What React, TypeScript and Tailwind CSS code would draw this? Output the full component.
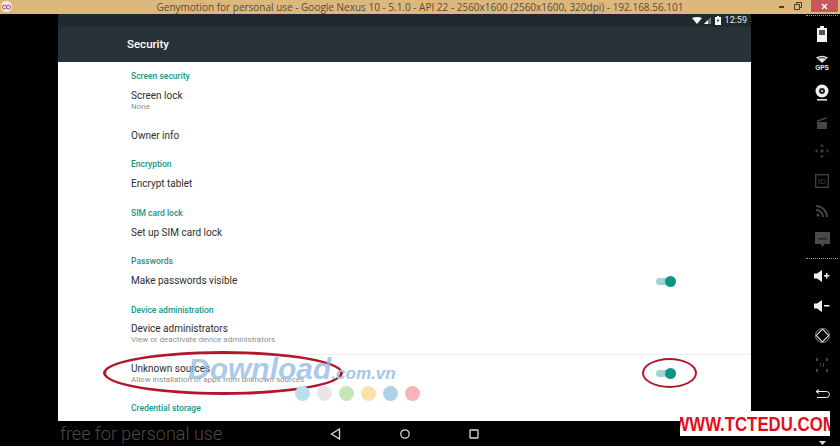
const roboto = "font-['Roboto',sans-serif]";

function Header({ children, className = "" }: { children: string; className?: string }) {
  return <div className={`h-4 text-[8.5px] leading-4 font-medium text-[#16968a] ${className}`}>{children}</div>;
}

function Toggle() {
  return (
    <div className="relative h-[11px] w-5 mr-[75px]">
      <div className="absolute left-0 right-[2px] top-[2px] h-[7px] rounded-full bg-[#9fd5cf]" />
      <div className="absolute right-0 top-0 h-[11px] w-[11px] rounded-full bg-[#0d9488]" />
    </div>
  );
}

function Title({ children, className = "" }: { children: string; className?: string }) {
  return <div className={`h-[14px] text-[10px] leading-[14px] text-[#2e2e2e] ${className}`}>{children}</div>;
}

function Sub({ children }: { children: string }) {
  return <div className="h-2 text-[8px] leading-2 text-[#8f8f8f] whitespace-nowrap">{children}</div>;
}

const slot = "flex h-[29.5px] items-center justify-center";

function Sidebar() {
  return (
    <div className="w-[89px] shrink-0 bg-black pl-[55px] pr-[2px] flex flex-col">
      <div className="mt-[1px] h-[1px] border-t border-dotted border-[#999]" />
      <div className="h-[3px]" />
      <div className={slot}>
        <svg width="12" height="16" viewBox="0 0 12 16"><path d="M4 0h4v2h3v14H1V2h3z" fill="#f2f2f2" /><rect x="3" y="4" width="6" height="5" fill="#555" /></svg>
      </div>
      <div className={slot}>
        <svg width="18" height="16" viewBox="0 0 18 16">
          <path d="M3 2.5Q9-1 15 2.5L9 8z" fill="#ddd" />
          <path d="M5.5 3.4Q9 1.6 12.5 3.4" stroke="#000" strokeWidth=".8" fill="none" />
          <text x="9" y="15" textAnchor="middle" fontSize="6.5" fontWeight="700" fill="#eee" fontFamily="Liberation Sans">GPS</text>
        </svg>
      </div>
      <div className={slot}>
        <svg width="14" height="17" viewBox="0 0 14 17">
          <circle cx="7" cy="7" r="6.5" fill="#f0f0f0" /><circle cx="7" cy="7" r="3" fill="#222" /><circle cx="7" cy="7" r="1" fill="#ddd" />
          <rect x="2" y="15" width="10" height="1.6" fill="#ddd" />
        </svg>
      </div>
      <div className={slot}>
        <svg width="12" height="13" viewBox="0 0 12 13"><path d="M1 4.5 10.5 1l.5 1.6L1.5 6z" fill="#444" /><rect x="1" y="6" width="10" height="7" fill="#444" /></svg>
      </div>
      <div className={slot}>
        <svg width="14" height="14" viewBox="0 0 14 14" fill="#444">
          <path d="M7 0 9 2.5H5zM7 14l2-2.5H5zM0 7l2.5-2v4zM14 7l-2.5-2v4z" /><circle cx="7" cy="7" r="1.5" />
        </svg>
      </div>
      <div className={slot}>
        <svg width="14" height="14" viewBox="0 0 14 14"><rect x=".7" y=".7" width="12.6" height="12.6" fill="none" stroke="#444" strokeWidth="1.3" /><text x="7" y="10" textAnchor="middle" fontSize="8" fill="#444" fontFamily="Liberation Sans">ID</text></svg>
      </div>
      <div className={slot}>
        <svg width="13" height="13" viewBox="0 0 13 13" fill="none" stroke="#444" strokeWidth="2">
          <circle cx="2" cy="11" r="1.6" fill="#444" stroke="none" /><path d="M0 6a7 7 0 0 1 7 7M0 2a11 11 0 0 1 11 11" />
        </svg>
      </div>
      <div className={slot}>
        <svg width="15" height="15" viewBox="0 0 15 15"><path d="M0 0h15v12H9.5L7.5 15l-2-3H0z" fill="#4a4a4a" /><path d="M3.5 6h2v1.6h-2zM6.5 6h2v1.6h-2zM9.5 6h2v1.6h-2z" fill="#111" /></svg>
      </div>
      <div className="h-[1px] border-t border-dotted border-[#999] mt-[3px] mb-[3px]" />
      <div className={slot}>
        <svg width="16" height="14" viewBox="0 0 16 14" fill="#f0f0f0"><path d="M0 4.5h3L8 1v12L3 9.5H0z" /><path d="M10 6h2V4h1.4v2h2v1.6h-2v2H12v-2h-2z" /></svg>
      </div>
      <div className={slot}>
        <svg width="16" height="14" viewBox="0 0 16 14" fill="#f0f0f0"><path d="M0 4.5h3L8 1v12L3 9.5H0z" /><path d="M10 6h5.5v1.5H10z" /></svg>
      </div>
      <div className={slot}>
        <svg width="15" height="15" viewBox="0 0 15 15" fill="none" stroke="#eee" strokeWidth="1"><rect x="3" y="3" width="9" height="9" rx="1" transform="rotate(45 7.5 7.5)" /><circle cx="7.5" cy="7.5" r="7" strokeWidth=".6" /></svg>
      </div>
      <div className={slot}>
        <svg width="14" height="16" viewBox="0 0 14 16" fill="#444"><path d="M1 1h2v3H1zM11 1h2v3h-2zM1 12h2v3H1zM11 12h2v3h-2zM5 6h1v4H5zM8 6h1v4H8z" /></svg>
      </div>
      <div className={slot}>
        <svg width="15" height="10" viewBox="0 0 15 10" fill="none" stroke="#eee" strokeWidth="1"><path d="M4 .5 1 2.5l3 2M1 2.5h10.5a2.5 2.5 0 0 1 0 6H2" /></svg>
      </div>
      <div className={slot}>
        <svg width="8" height="10" viewBox="0 0 8 10"><path d="M1 1h6v8H1z" fill="none" stroke="#333" /></svg>
      </div>
      <div className="flex h-[8px] items-end justify-center pb-[1px]">
        <svg width="7" height="4" viewBox="0 0 7 4"><path d="M0 0h7L3.5 4z" fill="#ddd" /></svg>
      </div>
    </div>
  );
}

export default function App() {
  return (
    <div className={`relative flex h-[446px] w-[840px] flex-col overflow-hidden bg-black ${roboto}`}>
      {/* Window title bar */}
      <div className="relative flex h-[14px] shrink-0 items-center justify-center bg-[#dcb87c]">
        <div className="absolute left-[1px] top-[1px] flex h-[11px] w-[11px] items-center justify-center rounded-full bg-[#f6e9e4]">
          <svg width="9" height="6" viewBox="0 0 9 6" fill="none" stroke="#c0392b" strokeWidth="1"><circle cx="2.5" cy="3" r="2" /><circle cx="6.5" cy="3" r="2" stroke="#8e44ad" /></svg>
        </div>
        <span className="font-['Open_Sans',sans-serif] text-[10px] leading-[14px] whitespace-nowrap text-[#5c4c30]">
          Genymotion for personal use - Google Nexus 10 - 5.1.0 - API 22 - 2560x1600 (2560x1600, 320dpi) - 192.168.56.101
        </span>
        <div className="absolute right-[2px] top-0 flex h-[12px] items-center">
          <div className="mr-[10px] mt-[2px] h-[2px] w-[5px] bg-[#4a3d28]" />
          <svg className="mr-[9px]" width="8" height="8" viewBox="0 0 8 8" fill="none" stroke="#4a3d28"><path d="M.5 2.5h5v5h-5zM2.5 2.5v-2h5v5h-2" /></svg>
          <div className="flex h-[12px] w-[27px] items-center justify-center bg-[#c9565a]">
            <svg width="7" height="7" viewBox="0 0 7 7" stroke="#fff" strokeWidth="1.4"><path d="m1 1 5 5M6 1 1 6" /></svg>
          </div>
        </div>
      </div>

      <div className="flex min-h-0 flex-1">
        <div className="w-[58px] shrink-0 bg-black" />

        {/* Android screen */}
        <div className="flex w-[693px] shrink-0 flex-col">
          <div className="flex h-[13px] shrink-0 items-center justify-end bg-[#20292e] pr-[4px]">
            <svg className="mr-[2px]" width="10" height="7" viewBox="0 0 10 7"><path d="M0 1Q5-1 10 1L5 7z" fill="#fff" /></svg>
            <svg className="mr-[4px]" width="7" height="7" viewBox="0 0 7 7"><path d="M0 7 7 0v7z" fill="#777" /><path d="M0 7 4 3v4z" fill="#fff" /></svg>
            <svg className="mr-[4px]" width="6" height="9" viewBox="0 0 6 9"><path d="M2 0h2v1h2v8H0V1h2z" fill="#fff" /><path d="M3.4 2 1.8 5h1l-.4 2.2L4.2 4h-1z" fill="#20292e" /></svg>
            <span className="text-[9px] leading-[13px] text-[#e8ecee]">12:59</span>
          </div>
          <div className="flex h-[35px] shrink-0 items-center bg-[#263238] pl-[69px] shadow-[0_1px_0_#9aa4a8]">
            <span className="text-[11.5px] font-medium text-white">Security</span>
          </div>

          <div className="min-h-0 flex-1 overflow-hidden bg-white pl-[73px] pt-[6px]">
            <Header>Screen security</Header>
            <Title className="mt-[5px]">Screen lock</Title>
            <Sub>None</Sub>
            <Title className="mt-[18px]">Owner info</Title>
            <Header className="mt-[13px]">Encryption</Header>
            <Title className="mt-[5px]">Encrypt tablet</Title>
            <Header className="mt-[14px]">SIM card lock</Header>
            <Title className="mt-[5px]">Set up SIM card lock</Title>
            <Header className="mt-[13px]">Passwords</Header>
            <div className="mt-[5px] flex h-[14px] items-center justify-between">
              <Title>Make passwords visible</Title>
              <Toggle />
            </div>
            <Header className="mt-[14px]">Device administration</Header>
            <Title className="mt-[4px]">Device administrators</Title>
            <Sub>View or deactivate device administrators</Sub>
            <div className="mt-[10px] h-[1px] bg-[#eeeeee]" />
            <div className="mt-[7px] flex h-[22px] items-center justify-between">
              <div>
                <Title>Unknown sources</Title>
                <Sub>Allow installation of apps from unknown sources</Sub>
              </div>
              <Toggle />
            </div>
            <Header className="mt-[16px]">Credential storage</Header>
          </div>

          <div className="relative flex h-[25px] shrink-0 items-center justify-center gap-[55px] bg-black">
            <span className="absolute left-[2px] top-[2px] text-[18px] leading-[22px] font-light whitespace-nowrap text-[#4a4a4a]">free for personal use</span>
            <svg width="14" height="14" viewBox="0 0 14 14" fill="none" stroke="#d8d8d8" strokeWidth="1.3"><path d="M10.5 2v10L2.5 7z" /></svg>
            <svg width="14" height="14" viewBox="0 0 14 14" fill="none" stroke="#d8d8d8" strokeWidth="1.3"><circle cx="7" cy="7" r="4.2" /></svg>
            <svg width="14" height="14" viewBox="0 0 14 14" fill="none" stroke="#d8d8d8" strokeWidth="1.3"><rect x="3" y="3" width="8" height="8" rx=".5" /></svg>
          </div>
        </div>

        <Sidebar />
      </div>

      {/* Overlays: annotations and watermarks */}
      <div className="pointer-events-none absolute left-[103px] top-[351px] h-[44px] w-[240px] rounded-[50%] border-[3px] border-[#b3162c]" />
      <div className="pointer-events-none absolute left-[642px] top-[358px] h-[30px] w-[55px] rounded-[50%] border-2 border-[#b3162c]" />

      <div className="pointer-events-none absolute left-[188px] top-[351px] flex items-baseline font-['Liberation_Sans',sans-serif] italic font-bold text-[#8fb9e2]/75 whitespace-nowrap">
        <span className="text-[30px] leading-[36px]">Download</span>
        <span className="text-[17px] leading-[20px] text-[#a6c6e6]">.com.vn</span>
      </div>
      <div className="pointer-events-none absolute left-[295px] top-[386px] flex gap-[7px]">
        <div className="h-[15px] w-[15px] rounded-full bg-[#b7e0f2]" />
        <div className="h-[15px] w-[15px] rounded-full bg-[#e6e6e6]" />
        <div className="h-[15px] w-[15px] rounded-full bg-[#c6e6b4]" />
        <div className="h-[15px] w-[15px] rounded-full bg-[#fbe0a8]" />
        <div className="h-[15px] w-[15px] rounded-full bg-[#add2ea]" />
        <div className="h-[15px] w-[15px] rounded-full bg-[#f6b4b8]" />
      </div>

      <div className="absolute left-[680px] top-[411px] flex h-[25px] w-[150px] items-center justify-center overflow-hidden bg-white">
        <span className="scale-x-[0.8] font-['Liberation_Sans',sans-serif] text-[21px] font-bold whitespace-nowrap text-[#e3101b]">WWW.TCTEDU.COM</span>
      </div>
    </div>
  );
}
